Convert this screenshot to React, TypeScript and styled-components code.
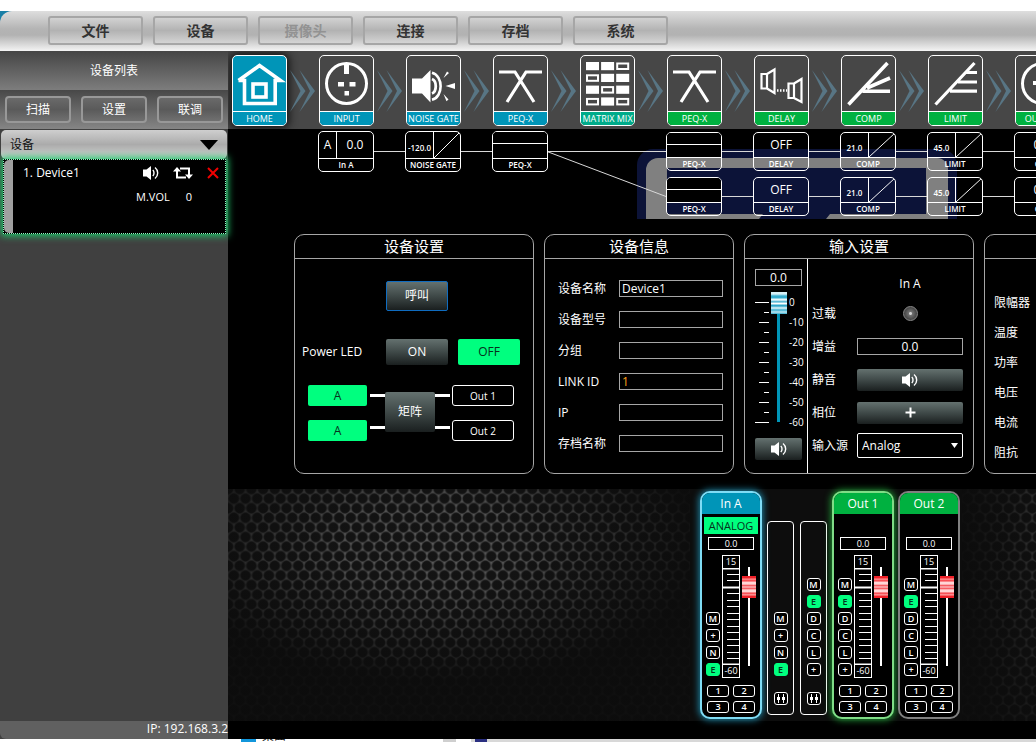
import React from "react";
import styled, { createGlobalStyle, css } from "styled-components";

const sans = `"Open Sans", "Noto Sans CJK SC", sans-serif`;
const blue = "#0095b8";
const green = "#00b140";
const teal = "#00ab8a";
const neon = "#00ff7f";
const metal = "linear-gradient(180deg, #64716f 0%, #3f4948 50%, #1a1f1f 100%)";

const Global = createGlobalStyle`
  *, *::before, *::after { box-sizing: border-box; }
  body { margin: 0; background: #fff; color: #fff; font: 12px/16px ${sans}; }
  button, input, select { font: inherit; color: inherit; margin: 0; padding: 0; border-radius: 0; }
  button { cursor: pointer; }
  h1, h2, h3, p { margin: 0; font: inherit; }
  svg { display: block; }
`;

/* ---------- window ---------- */

const Desktop = styled.div`
  padding-top: 11px;
  overflow: hidden;
`;

const AppWindow = styled.div`
  background: linear-gradient(90deg, #1a7fa6 0 20px, #fff 20px);
`;

const MenuBar = styled.nav`
  display: flex;
  gap: 10px;
  height: 40px;
  padding: 5px 0 6px 48px;
  border-top-left-radius: 12px;
  background: linear-gradient(180deg, #dedede 0%, #b4b4b4 45%, #b2b2b2 60%, #f4f4f4 100%);
`;

const MenuButton = styled.button`
  width: 95px;
  border: 2px solid #a6a6a6;
  border-radius: 3px;
  background: linear-gradient(180deg, #d2d2d2, #b2b2b2 50%, #d4d4d4);
  color: #333;
  font-size: 14px;
  font-weight: 600;
  &:disabled { color: #929292; cursor: default; }
`;

const Main = styled.div`
  display: grid;
  grid-template-columns: 228px minmax(0, 1fr);
  background: #000;
`;

/* ---------- sidebar ---------- */

const Sidebar = styled.aside`
  display: flex;
  flex-direction: column;
  background: #404040;
`;

const SidebarTitle = styled.h1`
  height: 39px;
  line-height: 39px;
  text-align: center;
  background: linear-gradient(180deg, #454545, #7d7d7d);
`;

const SidebarActions = styled.div`
  display: grid;
  grid-template-columns: repeat(3, 1fr);
  gap: 10px;
  height: 39px;
  padding: 6px 5px;
  background: linear-gradient(180deg, #484848, #858585);
`;

const SidebarButton = styled.button`
  border: 2px solid #989898;
  border-radius: 4px;
  background: linear-gradient(180deg, #6a6a6a, #5a5a5a 50%, #707070);
`;

const GroupHeader = styled.button`
  display: flex;
  justify-content: space-between;
  align-items: center;
  height: 29px;
  margin: 1px 1px 0;
  padding: 0 9px;
  border: 0;
  border-radius: 5px;
  background: linear-gradient(180deg, #cfcfcf, #ababab 50%, #d6d6d6);
  color: #111;
`;

const DeviceCard = styled.section`
  position: relative;
  display: grid;
  grid-template-columns: 9px minmax(0, 1fr);
  height: 75px;
  margin: 0 2px 0 3px;
  border: 1px dotted #8dffc4;
  background: #000;
  box-shadow: 0 0 7px 2px #1fc46a;
`;

const DeviceHandle = styled.span`
  border-radius: 5px 0 0 5px;
  background: #a0a0a0;
`;

const DeviceBody = styled.div`
  padding: 5px 6px 0 10px;
`;

const DeviceRow = styled.div`
  display: grid;
  grid-template-columns: minmax(0, 1fr) 16px 20px 12px;
  column-gap: 14px;
  align-items: center;
`;

const DeviceVolume = styled.p`
  display: flex;
  justify-content: flex-end;
  gap: 16px;
  padding: 8px 27px 0 0;
  font-size: 11px;
  font-weight: 500;
`;

const IconButton = styled.button`
  display: flex;
  justify-content: center;
  border: 0;
  background: none;
`;

const SidebarFooter = styled.footer`
  height: 18px;
  margin-top: auto;
  border-bottom-left-radius: 6px;
  background: #606060;
  text-align: right;
`;

/* ---------- signal toolbar ---------- */

const Content = styled.main`
  display: flex;
  flex-direction: column;
  min-width: 0;
  overflow: hidden;
`;

const Toolbar = styled.div`
  display: flex;
  height: 78px;
  padding: 4px 0 3px 4px;
  background: #474747;
  overflow: hidden;
`;

const Tile = styled.button<{ $accent: string; $active?: boolean }>`
  flex: none;
  display: flex;
  flex-direction: column;
  width: 55px;
  border: 1px solid #fff;
  border-radius: 5px;
  overflow: hidden;
  background: ${(p) => (p.$active ? p.$accent : "#474747")};
  box-shadow: ${(p) => (p.$active ? "0 0 8px 2px #111" : "none")};
  span {
    display: flex;
    justify-content: center;
    width: 100%;
    height: 14px;
    border-top: 1px solid #fff;
    background: ${(p) => p.$accent};
    font-size: 9px;
    font-weight: 500;
    line-height: 14px;
    white-space: nowrap;
  }
`;

const ArrowGap = styled.svg`
  flex: none;
  width: 32px;
  height: 71px;
`;

/* ---------- signal flow diagram ---------- */

const Flow = styled.div`
  position: relative;
  height: 105px;
  overflow: hidden;
`;

const FlowLines = styled.svg`
  position: absolute;
  left: 0;
  top: 0;
`;

const Node = styled.div<{ $x: number; $y: number; $h: number }>`
  position: absolute;
  left: ${(p) => p.$x}px;
  top: ${(p) => p.$y}px;
  display: flex;
  flex-direction: column;
  width: 56px;
  height: ${(p) => p.$h}px;
  border: 1px solid #fff;
  border-radius: 5px;
  overflow: hidden;
`;

const NodeTop = styled.div`
  flex: 1;
  display: flex;
  min-height: 0;
  border-bottom: 1px solid #fff;
`;

const NodeCell = styled.span<{ $w?: number; $small?: boolean }>`
  display: flex;
  align-items: center;
  justify-content: center;
  ${(p) => (p.$w ? css`width: ${p.$w}px; border-right: 1px solid #fff;` : css`flex: 1;`)}
  padding-top: ${(p) => (p.$small ? 5 : 0)}px;
  font-size: ${(p) => (p.$small ? 8 : 12)}px;
  font-weight: ${(p) => (p.$small ? 600 : 400)};
`;

const NodeGraph = styled.svg`
  width: 26px;
  height: 100%;
`;

const EqGraph = styled.span`
  flex: 1;
  background: linear-gradient(180deg, #000 0 11px, #fff 11px 12px, #000 12px);
`;

const NodeLabel = styled.span`
  height: 12px;
  font-size: 8px;
  font-weight: 600;
  line-height: 12px;
  text-align: center;
  white-space: nowrap;
`;

/* ---------- panels ---------- */

const Panels = styled.div`
  display: flex;
  gap: 10px;
  padding: 0 0 15px 66px;
`;

const Panel = styled.section<{ $w: number }>`
  flex: none;
  display: flex;
  flex-direction: column;
  width: ${(p) => p.$w}px;
  height: 240px;
  border: 1px solid #a6a6a6;
  border-radius: 10px;
`;

const PanelTitle = styled.h2`
  height: 24px;
  border-bottom: 1px solid #a6a6a6;
  font-size: 15px;
  line-height: 23px;
  text-align: center;
`;

const MetalButton = styled.button<{ $on?: boolean; $focus?: boolean }>`
  display: flex;
  align-items: center;
  justify-content: center;
  border: ${(p) => (p.$focus ? "1px solid #0f6cc0" : "0")};
  border-radius: 2px;
  background: ${(p) => (p.$on ? neon : metal)};
  color: ${(p) => (p.$on ? "#06301c" : "#fff")};
`;

const SetupGrid = styled.div`
  display: grid;
  grid-template-columns: 74px 62px 62px;
  grid-template-rows: 30px 26px;
  gap: 28px 10px;
  align-items: stretch;
  padding: 22px 0 0 7px;
  ${MetalButton}:first-child { grid-column: 2; }
  p { grid-column: 1; align-self: center; white-space: nowrap; }
`;

const Routing = styled.div`
  display: flex;
  align-items: flex-start;
  padding: 20px 0 0 13px;
`;

const Sources = styled.div`
  display: grid;
  grid-template-rows: 21px 21px;
  gap: 14px;
  width: 62px;
  padding-right: 3px;
`;

const Outputs = styled(Sources)`
  width: 64px;
  padding: 0 0 0 2px;
`;

const Wires = styled.span`
  width: 15px;
  height: 35px;
  margin-top: 9px;
  border: solid #fff;
  border-width: 3px 0;
`;

const MatrixButton = styled(MetalButton)`
  width: 50px;
  height: 40px;
  margin-top: 7px;
`;

const OutButton = styled.button`
  border: 1px solid #fff;
  border-radius: 3px;
  background: #000;
  font-size: 10px;
  font-weight: 500;
`;

const InfoForm = styled.form`
  display: grid;
  grid-template-columns: 61px 104px;
  grid-auto-rows: 31px;
  align-items: center;
  padding: 14px 0 0 13px;
`;

const TextBox = styled.input<{ $center?: boolean; $tone?: string }>`
  width: 100%;
  height: 17px;
  padding: 0 2px;
  border: 1px solid #a6a6a6;
  background: #000;
  color: ${(p) => p.$tone ?? "#fff"};
  line-height: 15px;
  text-align: ${(p) => (p.$center ? "center" : "left")};
`;

const InputBody = styled.div`
  flex: 1;
  display: grid;
  grid-template-columns: 63px minmax(0, 1fr);
`;

const InputLevel = styled.div`
  display: flex;
  flex-direction: column;
  padding: 10px 5px 0 10px;
  border-right: 1px solid #fff;
  ${MetalButton} { height: 22px; }
`;

const LevelScale = styled.div`
  display: grid;
  grid-template-columns: 15px 17px 15px;
  height: 146px;
  margin: 6px 0 0;
`;

const ScaleTicks = styled.svg`
  width: 15px;
  height: 141px;
`;

const ScaleLabels = styled.div`
  display: grid;
  grid-auto-rows: 20px;
  padding-left: 2px;
  font-size: 10px;
  line-height: 20px;
`;

const vertical = css`
  appearance: none;
  writing-mode: vertical-lr;
  direction: rtl;
`;

const LevelSlider = styled.input`
  ${vertical}
  width: 16px;
  height: 141px;
  justify-self: center;
  background: linear-gradient(${blue}, ${blue}) center / 3px 119px no-repeat;
  &::-webkit-slider-thumb {
    appearance: none;
    width: 16px;
    height: 22px;
    background: linear-gradient(180deg, #d8f1f8 0 2px, #35acce 4px 6px, #e9f8fc 7px 8px, #2fa6c9 10px, #fff 11px 12px, #2fa6c9 13px 14px, #e9f8fc 16px, #35acce 18px, #bfe7f2 20px, #35acce 22px);
  }
`;

const InputForm = styled.form`
  display: grid;
  grid-template-columns: 45px 106px;
  grid-template-rows: 27px repeat(5, 33px);
  align-items: center;
  padding: 11px 0 0 4px;
  h3 { grid-column: 2; text-align: center; }
  ${MetalButton} { height: 22px; }
`;

const OverloadLamp = styled.span`
  justify-self: center;
  width: 15px;
  height: 15px;
  border: 1px solid #8a8a8a;
  border-radius: 50%;
  background: radial-gradient(circle, #d0d0d0 0 1px, #707070 2px, #3c3c3c 7px);
`;

const SelectWrap = styled.span`
  position: relative;
  svg { position: absolute; right: 5px; top: 10px; pointer-events: none; }
`;

const Select = styled.select`
  appearance: none;
  width: 100%;
  height: 25px;
  padding: 0 4px;
  border: 1px solid #fff;
  border-radius: 2px;
  background: #000;
`;

const StatusList = styled.ul`
  display: grid;
  grid-auto-rows: 30px;
  align-items: center;
  margin: 0;
  padding: 29px 0 0 9px;
  list-style: none;
`;

/* ---------- mixer ---------- */

const Mixer = styled.section`
  display: grid;
  grid-template-columns: minmax(0, 1fr) auto 74px;
  height: 232px;
  margin-bottom: 18px;
`;

const Mesh = styled.svg`
  width: 100%;
  height: 232px;
`;

const Strips = styled.div`
  display: flex;
  gap: 4px;
  padding: 2px 2px 2px 10px;
  background: #0d0d0d;
`;

const Strip = styled.article<{ $accent: string; $edge: string; $glow?: string }>`
  display: flex;
  flex-direction: column;
  width: 62px;
  height: 228px;
  border: 2px solid ${(p) => p.$edge};
  border-radius: 10px;
  background: #000;
  box-shadow: ${(p) => (p.$glow ? `0 0 7px 1px ${p.$glow}` : "none")};
  h3 {
    height: 21px;
    border-radius: 8px 8px 0 0;
    background: ${(p) => p.$accent};
    font-size: 12px;
    font-weight: 500;
    line-height: 22px;
    text-align: center;
  }
`;

const SourceBadge = styled.span<{ $on: boolean }>`
  height: 17px;
  margin: 3px 2px;
  background: ${(p) => (p.$on ? neon : "transparent")};
  color: #06301c;
  font-size: 11px;
  line-height: 18px;
  text-align: center;
`;

const StripValue = styled.input`
  width: 46px;
  height: 13px;
  margin: 0 6px;
  border: 1px solid #fff;
  background: #000;
  font-size: 9px;
  font-weight: 500;
  line-height: 11px;
  text-align: center;
`;

const StripMiddle = styled.div`
  display: grid;
  grid-template-columns: 14px 18px 14px;
  gap: 2px;
  height: 123px;
  margin: 5px 4px 0;
`;

const KeyColumn = styled.div`
  display: flex;
  flex-direction: column;
  justify-content: flex-end;
  gap: 4px;
  padding-bottom: 2px;
`;

const Key = styled.button<{ $on?: boolean }>`
  display: flex;
  align-items: center;
  justify-content: center;
  width: 14px;
  height: 13px;
  border: 1px solid ${(p) => (p.$on ? neon : "#fff")};
  border-radius: 3px;
  background: ${(p) => (p.$on ? neon : "#000")};
  color: ${(p) => (p.$on ? "#06301c" : "#fff")};
  font-size: 9px;
  font-weight: 600;
  line-height: 11px;
`;

const Meter = styled.div`
  display: flex;
  flex-direction: column;
  border: 1px solid #fff;
  font-size: 9px;
  font-weight: 500;
  line-height: 12px;
  text-align: center;
  white-space: nowrap;
  svg { flex: none; width: 16px; height: 97px; }
`;

const Fader = styled.input`
  ${vertical}
  width: 14px;
  height: 99px;
  margin-top: 12px;
  background: linear-gradient(#fff, #fff) center / 2px 100% no-repeat;
  &::-webkit-slider-thumb {
    appearance: none;
    width: 14px;
    height: 22px;
    background: linear-gradient(180deg, #f02028 0 2px, #ff9a9a 3px, #f5353c 5px, #ffd6d6 6px 8px, #f5353c 10px, #fff 11px, #f5353c 12px, #ffd6d6 14px 16px, #f5353c 17px, #ffaaaa 19px, #f02028 20px 22px);
  }
`;

const PresetGrid = styled.div`
  display: grid;
  grid-template-columns: 22px 22px;
  grid-auto-rows: 12px;
  gap: 4px;
  margin: 7px 5px 0;
`;

const PresetButton = styled.button`
  border: 1px solid #fff;
  border-radius: 3px;
  background: #000;
  font-size: 9px;
  font-weight: 600;
  line-height: 10px;
`;

const LinkGroup = styled.div`
  display: flex;
  gap: 6px;
  align-items: flex-end;
  padding: 0 1px 4px;
`;

const LinkColumn = styled.div`
  display: flex;
  flex-direction: column;
  align-items: center;
  width: 27px;
  height: 194px;
  padding-bottom: 9px;
  border: 1px solid #fff;
  border-radius: 4px;
  ${KeyColumn} { flex: 1; padding-bottom: 16px; }
`;

/* ---------- desktop behind the window ---------- */

const DesktopEdge = styled.div`
  display: flex;
  align-items: flex-end;
  gap: 6px;
  height: 3px;
  padding-left: 241px;
  overflow: hidden;
  background: linear-gradient(90deg, #fff 0 443px, #cfcfcf 443px 456px, #fff 456px 471px, #d8d8d8 471px 475px, #2a2f80 475px 487px, #d8d8d8 487px);
  color: #111;
  i { width: 15px; height: 3px; background: #1296db; }
  b { height: 11px; font-weight: 400; line-height: 10px; }
`;

/* ---------- icons ---------- */

const art: Record<string, React.ReactNode> = {
  home: (
    <g fill="none" stroke="#fff" strokeWidth="3.6">
      <path d="M6.500 25.500L27.500 10.500L48.500 25.500H43.200V48.500H12.500V25.500H6.500" />
      <rect x="21" y="29" width="13" height="13" />
    </g>
  ),
  input: (
    <g fill="#fff">
      <circle cx="27.500" cy="28.500" r="20" fill="none" stroke="#fff" strokeWidth="3" />
      <path d="M25 8h5v11h-5zM19 27h6v4.500h-6zM30.500 27h6v4.500h-6zM25.500 36h4.500v4.500h-4.500z" />
    </g>
  ),
  gate: (
    <g fill="#fff">
      <path d="M6 23.500h10L24.500 15v32.500L16 38.500H6zM39.500 31l9.500-3v6zM37.500 23l3.500-6.500 2 1.500zM37.500 39l5 5.500-2 1.800z" />
      <path d="M26 24c5 2 5 12.500 0 14.500" fill="none" stroke="#fff" strokeWidth="2.800" />
      <path d="M26 17.800c11.500 3 11.500 24 0 27" fill="none" stroke="#fff" strokeWidth="2.600" />
    </g>
  ),
  peq: (
    <path d="M6 17H22L41 47M49 17H33L14 47" fill="none" stroke="#fff" strokeWidth="3.200" />
  ),
  matrix: (
    <g>
      {[0, 1, 2, 3].map((r) =>
        [0, 1, 2].map((c) => {
          const hollow = ["02", "10", "21", "30", "32"].includes(`${r}${c}`);
          const x = 6 + c * 15.1;
          const y = 7 + r * 11.8;
          return hollow ? (
            <rect key={`${r}${c}`} x={x + 1} y={y + 1.5} width="11" height="5.500" fill="none" stroke="#fff" strokeWidth="2" />
          ) : (
            <rect key={`${r}${c}`} x={x} y={y} width="13" height="8.200" fill="#fff" />
          );
        })
      )}
    </g>
  ),
  delay: (
    <g fill="none" stroke="#fff" strokeWidth="2.200">
      <path d="M7.500 19h5.500v14.500H7.500zM13 19l7.500-4.500V38L13 33.500M34.500 28.500H40V43h-5.500zM40 28.500l7.500-4.500v23L40 43" />
      <path d="M23 35.500h10" strokeDasharray="1.500 1.500" strokeWidth="2.500" />
    </g>
  ),
  comp: (
    <path d="M7.500 49.500L46.500 8M26 33L49 23M21.500 36.200H49" fill="none" stroke="#fff" strokeWidth="3.600" />
  ),
  limit: (
    <path d="M7.500 49.500L46.500 8M38 17.500H49M30 27H49M22 36.200H49" fill="none" stroke="#fff" strokeWidth="3.200" />
  ),
  output: (
    <g fill="#fff">
      <circle cx="27.500" cy="28.500" r="20" fill="none" stroke="#fff" strokeWidth="3" />
      <path d="M18 26h7v4h-7zM30 26h7v4h-7zM25.500 36h4.500v4.500h-4.500z" />
    </g>
  ),
};

const Speaker = () => (
  <svg width="16" height="14" viewBox="0 0 16 14" aria-hidden="true">
    <path d="M0 3.500h3.500L8 0v14L3.500 10.500H0z" fill="#fff" />
    <path d="M9.800 4c1.600 1.500 1.600 4.500 0 6M12 1.500c3.600 2.900 3.600 8.100 0 11" fill="none" stroke="#fff" strokeWidth="1.400" />
  </svg>
);

const LinkGlyph = () => (
  <svg width="10" height="9" viewBox="0 0 10 9" aria-hidden="true">
    <path d="M2.500 0v9M7.500 0v9" stroke="#fff" strokeWidth="1" />
    <path d="M1 3h3v3H1zM6 3h3v3H6z" fill="#fff" />
  </svg>
);

/* ---------- data ---------- */

const tiles = [
  { id: "home", label: "HOME", accent: blue, active: true },
  { id: "input", label: "INPUT", accent: blue },
  { id: "gate", label: "NOISE GATE", accent: blue },
  { id: "peq", label: "PEQ-X", accent: blue },
  { id: "matrix", label: "MATRIX MIX", accent: teal },
  { id: "peq", label: "PEQ-X", accent: green },
  { id: "delay", label: "DELAY", accent: green },
  { id: "comp", label: "COMP", accent: green },
  { id: "limit", label: "LIMIT", accent: green },
  { id: "output", label: "OUTPUT", accent: green },
];

const menus = ["文件", "设备", "摄像头", "连接", "存档", "系统"];

const info = [
  { label: "设备名称", value: "Device1" },
  { label: "设备型号", value: "" },
  { label: "分组", value: "" },
  { label: "LINK ID", value: "1", tone: "#ffa01a" },
  { label: "IP", value: "" },
  { label: "存档名称", value: "" },
];

const inputKeys = ["M", "+", "N", "E"];
const outputKeys = ["M", "E", "D", "C", "L", "+"];

/* ---------- parts ---------- */

const Arrow = () => (
  <ArrowGap viewBox="0 0 32 71" aria-hidden="true">
    <g fill="#587584">
      <path d="M3 15L18.500 36L3 57L13.500 36z" />
      <path d="M12.500 15L28 36L12.500 57L23 36z" />
    </g>
  </ArrowGap>
);

const CurveNode = ({ x, y, h, value, label, w }: { x: number; y: number; h: number; value: string; label: string; w: number }) => (
  <Node $x={x} $y={y} $h={h}>
    <NodeTop>
      <NodeCell $w={w} $small>{value}</NodeCell>
      <NodeGraph viewBox="0 0 26 26" preserveAspectRatio="none" aria-hidden="true">
        <path d="M0 26L26 0" stroke="#fff" fill="none" />
      </NodeGraph>
    </NodeTop>
    <NodeLabel>{label}</NodeLabel>
  </Node>
);

const EqNode = ({ x, y, h }: { x: number; y: number; h: number }) => (
  <Node $x={x} $y={y} $h={h}>
    <NodeTop><EqGraph /></NodeTop>
    <NodeLabel>PEQ-X</NodeLabel>
  </Node>
);

const TextNode = ({ x, y, h, value, label }: { x: number; y: number; h: number; value: string; label: string }) => (
  <Node $x={x} $y={y} $h={h}>
    <NodeTop><NodeCell>{value}</NodeCell></NodeTop>
    <NodeLabel>{label}</NodeLabel>
  </Node>
);

const SignalFlow = () => (
  <Flow>
    <FlowLines width="880" height="90" viewBox="0 0 880 90" aria-hidden="true">
      <path d="M409 90V36a16 16 0 0 1 16-16H713a16 16 0 0 1 16 16V90z" fill="#0c1338" />
      <path d="M418 90V41a12 12 0 0 1 12-12H709a11 11 0 0 1 11 11V90H598L602 85H698V39H439V85H535L531 90z" fill="#808080" />
      <path d="M145 22.500H177M232 22.500H264M319 22.500H438M493 22.500H525M580 22.500H612M667 22.500H699M754 22.500H786M493 67.500H525M580 67.500H612M667 67.500H699M754 67.500H786M319 22.500L438 67.500" stroke="#d8d8d8" fill="none" />
    </FlowLines>
    <Node $x={90} $y={2} $h={41}>
      <NodeTop>
        <NodeCell $w={18}>A</NodeCell>
        <NodeCell>0.0</NodeCell>
      </NodeTop>
      <NodeLabel>In A</NodeLabel>
    </Node>
    <CurveNode x={177} y={2} h={41} w={28} value="-120.0" label="NOISE GATE" />
    <EqNode x={264} y={2} h={41} />
    {[3, 48].map((y) => (
      <React.Fragment key={y}>
        <EqNode x={438} y={y} h={39} />
        <TextNode x={525} y={y} h={39} value="OFF" label="DELAY" />
        <CurveNode x={612} y={y} h={39} w={28} value="21.0" label="COMP" />
        <CurveNode x={699} y={y} h={39} w={28} value="45.0" label="LIMIT" />
        <TextNode x={786} y={y} h={39} value="0.0" label="Out" />
      </React.Fragment>
    ))}
  </Flow>
);

type MeshProps = { id: string; cx: string; cy: string; r: string; stops: [string, number][] };

const HexMesh = ({ id, cx, cy, r, stops }: MeshProps) => (
  <Mesh aria-hidden="true">
    <defs>
      <pattern id={`${id}-cells`} width="11.700" height="19.200" patternUnits="userSpaceOnUse">
        <rect width="11.700" height="19.200" fill="#5c5c5c" />
        <g fill="#141414" stroke="#2a2a2a" strokeWidth="0.600">
          <circle cx="5.850" cy="9.600" r="5.200" />
          <circle cx="0" cy="0" r="5.200" />
          <circle cx="11.700" cy="0" r="5.200" />
          <circle cx="0" cy="19.200" r="5.200" />
          <circle cx="11.700" cy="19.200" r="5.200" />
        </g>
      </pattern>
      <radialGradient id={`${id}-shade`} cx={cx} cy={cy} r={r}>
        {stops.map(([offset, opacity]) => (
          <stop key={offset} offset={offset} stopColor="#0c0c0c" stopOpacity={opacity} />
        ))}
      </radialGradient>
    </defs>
    <rect width="100%" height="100%" fill={`url(#${id}-cells)`} />
    <rect width="100%" height="100%" fill={`url(#${id}-shade)`} />
  </Mesh>
);

type StripProps = {
  name: string;
  accent: string;
  edge: string;
  glow?: string;
  source?: string;
  keys: string[];
};

const ChannelStrip = ({ name, accent, edge, glow, source, keys }: StripProps) => (
  <Strip $accent={accent} $edge={edge} $glow={glow}>
    <h3>{name}</h3>
    <SourceBadge $on={!!source}>{source}</SourceBadge>
    <StripValue aria-label={`${name} level`} defaultValue="0.0" />
    <StripMiddle>
      <KeyColumn>
        {keys.map((k) => <Key key={k} $on={k === "E"}>{k}</Key>)}
      </KeyColumn>
      <Meter>
        15
        <svg viewBox="0 0 16 97" aria-hidden="true">
          <path d="M0 0.500H16M0 96.500H16" stroke="#fff" strokeWidth="2" />
          <path d="M0 19.500H16" stroke="#fff" strokeWidth="2" />
          <path d="M4 6.500H16M4 12.500H16M4 25.500H16M4 32.500H16M4 38.500H16M4 45.500H16M4 51.500H16M4 58.500H16M4 64.500H16M4 71.500H16M4 77.500H16M4 84.500H16M4 90.500H16" stroke="#fff" />
        </svg>
        -60
      </Meter>
      <Fader type="range" aria-label={`${name} fader`} min={-60} max={8} defaultValue={0} />
    </StripMiddle>
    <PresetGrid>
      {[1, 2, 3, 4].map((n) => <PresetButton key={n}>{n}</PresetButton>)}
    </PresetGrid>
  </Strip>
);

const LinkStrip = ({ keys }: { keys: string[] }) => (
  <LinkColumn>
    <KeyColumn>
      {keys.map((k) => <Key key={k} $on={k === "E"}>{k}</Key>)}
    </KeyColumn>
    <Key aria-label="Link faders"><LinkGlyph /></Key>
  </LinkColumn>
);

const DeviceList = () => (
  <Sidebar>
    <SidebarTitle>设备列表</SidebarTitle>
    <SidebarActions>
      <SidebarButton>扫描</SidebarButton>
      <SidebarButton>设置</SidebarButton>
      <SidebarButton>联调</SidebarButton>
    </SidebarActions>
    <GroupHeader>
      设备
      <svg width="18" height="10" viewBox="0 0 18 10" aria-hidden="true"><path d="M0 0h18L9 10z" fill="#000" /></svg>
    </GroupHeader>
    <DeviceCard>
      <DeviceHandle />
      <DeviceBody>
        <DeviceRow>
          <span>1. Device1</span>
          <IconButton aria-label="Mute"><Speaker /></IconButton>
          <IconButton aria-label="Sync">
            <svg width="20" height="12" viewBox="0 0 20 12" aria-hidden="true">
              <path d="M4 2v8.500h9M7 1.500h9V9" fill="none" stroke="#fff" strokeWidth="2" />
              <path d="M0 4.500L4 0l4 4.500zM12 7.500h8L16 12z" fill="#fff" />
            </svg>
          </IconButton>
          <IconButton aria-label="Remove">
            <svg width="12" height="12" viewBox="0 0 12 12" aria-hidden="true"><path d="M1 1l10 10M11 1L1 11" stroke="#f00000" strokeWidth="2" /></svg>
          </IconButton>
        </DeviceRow>
        <DeviceVolume><span>M.VOL</span><span>0</span></DeviceVolume>
      </DeviceBody>
    </DeviceCard>
    <SidebarFooter>IP: 192.168.3.2</SidebarFooter>
  </Sidebar>
);

export default function App() {
  return (
    <Desktop>
      <Global />
      <AppWindow>
        <MenuBar>
          {menus.map((m) => <MenuButton key={m} disabled={m === "摄像头"}>{m}</MenuButton>)}
        </MenuBar>
        <Main>
          <DeviceList />
          <Content>
            <Toolbar>
              {tiles.map((t, i) => (
                <React.Fragment key={i}>
                  {i > 0 && <Arrow />}
                  <Tile $accent={t.accent} $active={t.active}>
                    <svg width="53" height="55" viewBox="1 1 53 55" aria-hidden="true">{art[t.id]}</svg>
                    <span>{t.label}</span>
                  </Tile>
                </React.Fragment>
              ))}
            </Toolbar>
            <SignalFlow />
            <Panels>
              <Panel $w={240}>
                <PanelTitle>设备设置</PanelTitle>
                <SetupGrid>
                  <MetalButton $focus>呼叫</MetalButton>
                  <p>Power LED</p>
                  <MetalButton>ON</MetalButton>
                  <MetalButton $on>OFF</MetalButton>
                </SetupGrid>
                <Routing>
                  <Sources>
                    <MetalButton $on>A</MetalButton>
                    <MetalButton $on>A</MetalButton>
                  </Sources>
                  <Wires />
                  <MatrixButton>矩阵</MatrixButton>
                  <Wires />
                  <Outputs>
                    <OutButton>Out 1</OutButton>
                    <OutButton>Out 2</OutButton>
                  </Outputs>
                </Routing>
              </Panel>
              <Panel $w={190}>
                <PanelTitle>设备信息</PanelTitle>
                <InfoForm>
                  {info.map((f, i) => (
                    <React.Fragment key={f.label}>
                      <label htmlFor={`info-${i}`}>{f.label}</label>
                      <TextBox id={`info-${i}`} defaultValue={f.value} $tone={f.tone} />
                    </React.Fragment>
                  ))}
                </InfoForm>
              </Panel>
              <Panel $w={230}>
                <PanelTitle>输入设置</PanelTitle>
                <InputBody>
                  <InputLevel>
                    <TextBox aria-label="Input level" defaultValue="0.0" $center />
                    <LevelScale>
                      <ScaleTicks viewBox="0 0 15 141" aria-hidden="true">
                        <path
                          d={Array.from({ length: 13 }, (_, i) => {
                            const start = i === 0 || i === 12 ? 0 : i % 2 === 0 ? 4 : 9;
                            return `M${start} ${10.5 + i * 10}H14`;
                          }).join("")}
                          stroke="#fff"
                        />
                      </ScaleTicks>
                      <LevelSlider type="range" aria-label="Input fader" min={-60} max={0} defaultValue={0} />
                      <ScaleLabels>
                        {[0, -10, -20, -30, -40, -50, -60].map((n) => <span key={n}>{n}</span>)}
                      </ScaleLabels>
                    </LevelScale>
                    <MetalButton aria-label="Mute input"><Speaker /></MetalButton>
                  </InputLevel>
                  <InputForm>
                    <h3>In A</h3>
                    <span>过载</span>
                    <OverloadLamp />
                    <label htmlFor="gain">增益</label>
                    <TextBox id="gain" defaultValue="0.0" $center />
                    <label htmlFor="mute">静音</label>
                    <MetalButton id="mute" type="button"><Speaker /></MetalButton>
                    <label htmlFor="phase">相位</label>
                    <MetalButton id="phase" type="button">
                      <svg width="11" height="11" viewBox="0 0 11 11" aria-hidden="true"><path d="M5.500 0.500v10M0.500 5.500h10" stroke="#fff" strokeWidth="2" /></svg>
                    </MetalButton>
                    <label htmlFor="source">输入源</label>
                    <SelectWrap>
                      <Select id="source" defaultValue="Analog"><option>Analog</option></Select>
                      <svg width="7" height="5" viewBox="0 0 7 5" aria-hidden="true"><path d="M0 0h7L3.500 5z" fill="#fff" /></svg>
                    </SelectWrap>
                  </InputForm>
                </InputBody>
              </Panel>
              <Panel $w={190}>
                <PanelTitle />
                <StatusList>
                  {["限幅器", "温度", "功率", "电压", "电流", "阻抗"].map((s) => <li key={s}>{s}</li>)}
                </StatusList>
              </Panel>
            </Panels>
            <Mixer>
              <HexMesh id="left" cx="45%" cy="25%" r="58%" stops={[["0", 0], ["0.35", 0.15], ["0.7", 0.6], ["1", 0.95]]} />
              <Strips>
                <ChannelStrip name="In A" accent={blue} edge="#7fdcf5" glow="#1d88a8" source="ANALOG" keys={inputKeys} />
                <LinkGroup>
                  <LinkStrip keys={inputKeys} />
                  <LinkStrip keys={outputKeys} />
                </LinkGroup>
                <ChannelStrip name="Out 1" accent={green} edge="#7fdc86" glow="#1f9a35" keys={outputKeys} />
                <ChannelStrip name="Out 2" accent={green} edge="#808080" keys={outputKeys} />
              </Strips>
              <HexMesh id="right" cx="130%" cy="20%" r="130%" stops={[["0", 0.4], ["0.6", 0.8], ["1", 0.96]]} />
            </Mixer>
          </Content>
        </Main>
      </AppWindow>
      <DesktopEdge><i /><b>桌面</b></DesktopEdge>
    </Desktop>
  );
}
